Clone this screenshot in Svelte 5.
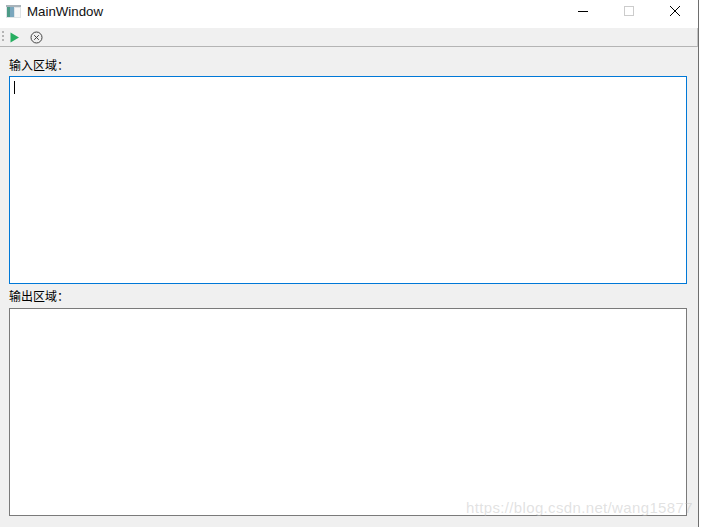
<script>
  const title = "MainWindow";
</script>

<div class="window">
  <header class="titlebar">
    <svg class="appicon" width="15" height="13" viewBox="0 0 15 13" aria-hidden="true">
      <rect x="0" y="0" width="15" height="13" fill="#dfe4e7" />
      <rect x="0" y="0" width="15" height="2" fill="#a9b3ba" />
      <rect x="1" y="2" width="3" height="10" fill="#4c9a86" />
      <rect x="4" y="2" width="4" height="10" fill="#79a6bd" />
      <rect x="9" y="3" width="5" height="9" fill="#f7f7f7" />
    </svg>
    <span class="title">{title}</span>
    <div class="controls">
      <svg width="12" height="12" viewBox="0 0 12 12" aria-hidden="true">
        <path d="M1 6.5h10" stroke="#000" />
      </svg>
      <svg width="12" height="12" viewBox="0 0 12 12" aria-hidden="true">
        <rect x="1.5" y="1.5" width="9" height="9" fill="none" stroke="#ccc" />
      </svg>
      <svg width="12" height="12" viewBox="0 0 12 12" aria-hidden="true">
        <path d="M1 1l10 10M11 1L1 11" stroke="#000" />
      </svg>
    </div>
  </header>

  <div class="toolbar">
    <svg class="grip" width="3" height="14" viewBox="0 0 3 14" aria-hidden="true">
      <path d="M0 1h2v2H0zM0 5h2v2H0zM0 9h2v2H0z" fill="#b4b4b4" />
    </svg>
    <svg class="play" width="10" height="11" viewBox="0 0 10 11" aria-hidden="true">
      <path d="M0.5 0.5l8.5 5-8.5 5z" fill="#27ae60" />
    </svg>
    <svg class="stop" width="13" height="13" viewBox="0 0 13 13" aria-hidden="true">
      <circle cx="6.5" cy="6.5" r="5.5" fill="none" stroke="#444" />
      <path d="M4.2 4.2l4.6 4.6M8.8 4.2l-4.6 4.6" stroke="#444" />
    </svg>
  </div>

  <main class="content">
    <div class="label">输入区域：</div>
    <div class="box input"><span class="caret"></span></div>
    <div class="label second">输出区域：</div>
    <div class="box output"></div>
  </main>

  <div class="watermark">https://blog.csdn.net/wang15877</div>
</div>

<style>
  :global(body) {
    margin: 0;
    background: #fff;
  }

  .window {
    position: relative;
    width: 698px;
    height: 527px;
    background: #f0f0f0;
    border-right: 1px solid #6e6e6e;
    overflow: hidden;
    font-family: "Noto Sans CJK SC", "Liberation Sans", sans-serif;
  }

  .titlebar {
    display: flex;
    align-items: flex-start;
    height: 28px;
    padding-left: 6px;
    padding-top: 4px;
    box-sizing: border-box;
    background: #fff;
  }

  .appicon {
    margin-top: 1px;
    margin-right: 6px;
  }

  .title {
    font: 13.3px/15px "Liberation Sans", sans-serif;
    color: #111;
  }

  .controls {
    display: flex;
    margin-left: auto;
    margin-right: 17px;
    margin-top: 1px;
    gap: 34px;
  }

  .toolbar {
    display: flex;
    align-items: center;
    height: 18px;
    padding-left: 2px;
    border-bottom: 1px solid #b4b4b4;
    border-right: 1px solid #c4c4c4;
  }

  .play {
    margin-left: 5px;
  }

  .stop {
    margin-left: 10px;
  }

  .content {
    padding: 9px 11px 0 9px;
  }

  .label {
    height: 20px;
    font-size: 12px;
    line-height: 17px;
    color: #000;
  }

  .second {
    margin-top: 3px;
    height: 21px;
  }

  .box {
    box-sizing: border-box;
    background: #fff;
    border: 1px solid #7a7a7a;
  }

  .input {
    height: 208px;
    padding: 4px;
    border-color: #0078d7;
  }

  .output {
    height: 208px;
  }

  .caret {
    display: block;
    width: 1px;
    height: 13px;
    background: #000;
  }

  .watermark {
    position: absolute;
    left: 466px;
    top: 499px;
    font: 15px "Liberation Sans", sans-serif;
    letter-spacing: 0.35px;
    color: rgba(190, 190, 190, 0.45);
    white-space: nowrap;
  }
</style>
